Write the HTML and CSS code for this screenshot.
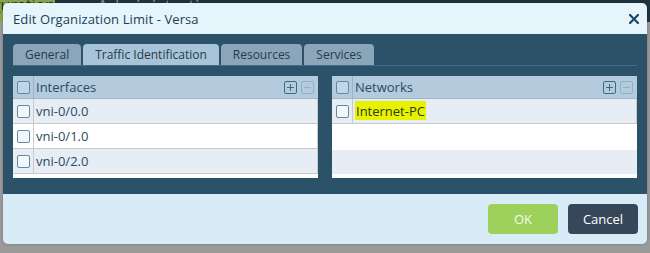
FILE: index.html
```html
<!DOCTYPE html>
<html lang="en">
<head>
  <meta charset="UTF-8">
  <title>Edit Organization Limit</title>
  <link rel="stylesheet" href="styles.css">
</head>
<body>
  <div class="topbar">
    <span class="nav-tab">Configuration</span>
    <span class="nav-link">Administration</span>
  </div>

  <div class="modal">
    <div class="modal-head">
      <span class="modal-title">Edit Organization Limit - Versa</span>
      <svg class="modal-close" viewBox="0 0 10 10"><path d="M1 1L9 9M9 1L1 9" stroke="#1b4863" stroke-width="2.2" stroke-linecap="square"/></svg>
    </div>

    <div class="modal-body">
      <div class="tabs">
        <div class="tab">General</div>
        <div class="tab active">Traffic Identification</div>
        <div class="tab">Resources</div>
        <div class="tab">Services</div>
      </div>

      <div class="panels">
        <div class="grid">
          <div class="grid-head">
            <div class="cb-cell"><span class="cb"></span></div>
            <div class="grid-title">Interfaces</div>
            <div class="grid-tools">
              <span class="tool add"></span>
              <span class="tool remove"></span>
            </div>
          </div>
          <div class="row">
            <div class="cb-cell"><span class="cb"></span></div>
            <div class="cell">vni-0/0.0</div>
          </div>
          <div class="row odd">
            <div class="cb-cell"><span class="cb"></span></div>
            <div class="cell">vni-0/1.0</div>
          </div>
          <div class="row">
            <div class="cb-cell"><span class="cb"></span></div>
            <div class="cell">vni-0/2.0</div>
          </div>
        </div>

        <div class="grid">
          <div class="grid-head">
            <div class="cb-cell"><span class="cb"></span></div>
            <div class="grid-title">Networks</div>
            <div class="grid-tools">
              <span class="tool add"></span>
              <span class="tool remove"></span>
            </div>
          </div>
          <div class="row">
            <div class="cb-cell"><span class="cb"></span></div>
            <div class="cell"><span class="mark">Internet-PC</span></div>
          </div>
          <div class="filler"></div>
          <div class="filler alt"></div>
        </div>
      </div>
    </div>

    <div class="modal-foot">
      <button class="btn btn-ok" type="button">OK</button>
      <button class="btn btn-cancel" type="button">Cancel</button>
    </div>
  </div>
</body>
</html>
```

FILE: styles.css
```css
html, body {
  margin: 0; padding: 0;
  height: 100%;
  font-family: 'Open Sans', 'Liberation Sans', Arial, sans-serif;
  background: #9a9a9a;
  overflow: hidden;
}
/* page behind the dialog */
.topbar {
  height: 22px;
  background: #1f3340;
  display: flex;
  align-items: flex-start;
  overflow: hidden;
}
.nav-tab {
  width: 55px;
  height: 22px;
  background: #8aa64c;
  color: #203020;
  font-size: 16px;
  line-height: 10px;
  text-align: right;
  overflow: hidden;
  white-space: nowrap;
  direction: rtl;
}
.nav-link {
  margin-left: 42px;
  color: #7f9298;
  font-size: 18px;
  line-height: 12px;
}

/* dialog */
.modal {
  position: absolute;
  left: 3px; top: 3px;
  width: 644px;
  border-radius: 5px;
  overflow: hidden;
  box-shadow: 0 0 3px #0004;
}
.modal-head {
  height: 31px;
  background: #e6f4fb;
  display: flex; align-items: center; justify-content: space-between;
  padding: 0 8px 0 10px;
}
.modal-title {
  font-size: 13px;
  color: #1c3d57;
  letter-spacing: 0.1px;
}
.modal-close {
  width: 10px; height: 10px;
  margin-top: 1px;
}
.modal-body {
  background: #2c526a;
  padding: 10px 10px 16px 10px;
}
.tabs {
  display: flex; gap: 2px;
  height: 21px;
  border-bottom: 1px solid #3f6f85;
}
.tab {
  height: 21px;
  line-height: 22px;
  padding: 0 12px;
  background: #8ba6ba;
  color: #263a4a;
  font-size: 12px;
  border-radius: 4px 4px 0 0;
}
.tab.active { background: #a8c4d8; }

.panels {
  display: grid;
  grid-template-columns: 1fr 1fr;
  gap: 14px;
  margin-top: 10px;
}
.grid {
  background: #fff;
  height: 102px;
  overflow: hidden;
}
.grid-head {
  height: 22px;
  display: flex; align-items: center;
  background: #b3cbdd;
  border-bottom: 1px solid #9fb6c6;
}
.cb-cell {
  width: 21px;
  align-self: stretch;
  display: flex; align-items: center;
  padding-left: 4px;
  box-sizing: border-box;
  border-right: 1px solid #c9c9c9;
}
.grid-head .cb-cell { border-right-color: #9ab3c5; }
.cb {
  width: 11px; height: 11px;
  border: 1px solid #5f8aa8;
  border-radius: 2px;
  background: #f3f7fa;
  display: block;
}
.grid-head .cb { background: #c3d6e4; }
.grid-title, .cell {
  padding-left: 2px;
  font-size: 13px;
  color: #2a4a62;
}
.grid-title { flex: 1; }
.grid-tools {
  display: flex; gap: 4px;
  padding-right: 4px;
}
.tool {
  width: 11px; height: 11px;
  border: 1px solid #3d6986;
  border-radius: 2px;
  position: relative;
  display: block;
}
.tool::before, .tool::after {
  content: '';
  position: absolute;
  background: #3d6986;
  left: 2px; top: 5px;
  width: 7px; height: 1px;
}
.tool.add::after { left: 5px; top: 2px; width: 1px; height: 7px; }
.tool.remove { border-color: #8fb1c6; }
.tool.remove::before { background: #8fb1c6; }
.tool.remove::after { display: none; }

.row {
  height: 24px;
  display: flex; align-items: center;
  background: #e6edf4;
  border-bottom: 1px solid #c9c9c9;
  border-right: 1px solid #c9c9c9;
}
.row.odd { background: #fff; }
.cell { flex: 1; }
.mark {
  background: #e6f200;
  color: #2c3c1a;
  padding: 1px 1px 0 1px;
}
.filler { height: 26px; background: #fff; }
.filler.alt { height: 24px; background: #e6edf4; }

.modal-foot {
  background: #d7ecf7;
  display: flex; justify-content: flex-end; gap: 10px;
  padding: 10px 9px 10px 0;
}
.btn {
  width: 70px; height: 30px;
  border: none;
  border-radius: 4px;
  font-family: 'Open Sans', 'Liberation Sans', Arial, sans-serif;
  font-size: 13px;
  color: #fff;
  cursor: pointer;
}
.btn-ok { background: #9dd15c; color: #f5fbe9; }
.btn-cancel { background: #37475a; }
```
